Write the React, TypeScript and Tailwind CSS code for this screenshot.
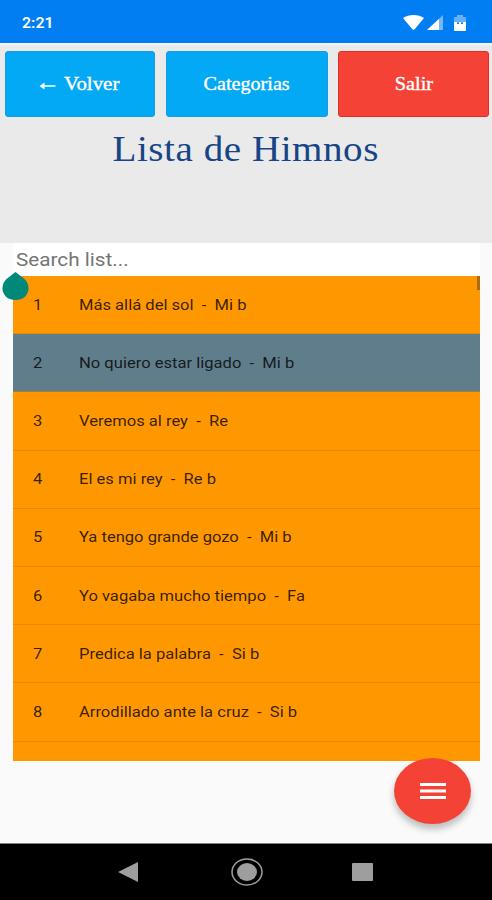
import React from 'react';

interface Hymn {
  id: number;
  title: string;
  tone: string;
}

const hymns: Hymn[] = [
  { id: 1, title: 'Más allá del sol', tone: 'Mi b' },
  { id: 2, title: 'No quiero estar ligado', tone: 'Mi b' },
  { id: 3, title: 'Veremos al rey', tone: 'Re' },
  { id: 4, title: 'El es mi rey', tone: 'Re b' },
  { id: 5, title: 'Ya tengo grande gozo', tone: 'Mi b' },
  { id: 6, title: 'Yo vagaba mucho tiempo', tone: 'Fa' },
  { id: 7, title: 'Predica la palabra', tone: 'Si b' },
  { id: 8, title: 'Arrodillado ante la cruz', tone: 'Si b' },
];

const StatusBar = () => (
  <header className="flex h-[45px] shrink-0 items-center justify-between border-b-2 border-[#f2f5fa] bg-[#007ef2] pl-[22px] pr-[26px] text-white">
    <span className="origin-left scale-x-[1.06] pt-[3px] text-[15px] font-semibold">2:21</span>
    <div className="flex items-center pt-0.5">
      <svg className="h-[15px] w-[21px]" viewBox="0 0 22 15" preserveAspectRatio="none" fill="currentColor">
        <path d="M0 3C6-1 16-1 22 3L12.2 14.3Q11 15.3 9.8 14.3Z" />
      </svg>
      <svg className="ml-[3px] h-[15px] w-4" viewBox="0 0 16 15" fill="currentColor">
        <path d="M0 15L16 0V15Z" opacity=".45" />
        <path d="M0 15L12 4V15Z" />
      </svg>
      <svg className="ml-[11px] h-4 w-3" viewBox="0 0 12 16" fill="currentColor">
        <path d="M3 2V0H9V2H11Q12 2 12 3V8H0V3Q0 2 1 2Z" opacity=".4" />
        <path d="M0 7H3V9H5V7H7V9H9V7H12V15Q12 16 11 16H1Q0 16 0 15Z" />
      </svg>
    </div>
  </header>
);

const HymnRow = ({ hymn, selected }: { hymn: Hymn; selected: boolean }) => (
  <li
    className={`flex h-[58.2px] shrink-0 items-center border-b pl-5 pt-[2px] text-[14.5px] text-black/80 ${
      selected ? 'border-[#a77d3b] bg-[#607d8b]' : 'border-[#e98b00]'
    }`}
  >
    <span className="w-[46px] origin-left scale-x-[1.14]">{hymn.id}</span>
    <span className="origin-left scale-x-[1.142] whitespace-pre">{`${hymn.title}  -  ${hymn.tone}`}</span>
  </li>
);

export default function App() {
  return (
    <div className="relative flex h-[900px] w-[492px] flex-col overflow-hidden bg-[#fafafa] font-['Roboto',sans-serif]">
      <StatusBar />

      <section className="h-[198px] shrink-0 bg-[#eaeaea] pt-1.5 font-['Liberation_Serif',serif]">
        <div className="flex h-[66px] justify-between pl-[5px] pr-[3px] text-[19px] text-white">
          <button className="flex w-[150px] items-center justify-center rounded-[3px] border border-[#129de0] bg-[#03a9f4] pr-1.5">
            <svg className="mr-2 mt-1 h-2 w-[17px]" viewBox="0 0 16 8" fill="currentColor">
              <path d="M0 4L5 0.5V3.2H16V4.8H5V7.5Z" />
            </svg>
            <span className="origin-left scale-x-[1.1] [-webkit-text-stroke:0.35px_white]">Volver</span>
          </button>
          <button className="w-[162px] rounded-[3px] border border-[#129de0] bg-[#03a9f4] [-webkit-text-stroke:0.35px_white]">
            <span className="inline-block scale-x-[1.06]">Categorias</span>
          </button>
          <button className="w-[151px] rounded-[3px] border border-[#e62b20] bg-[#f44336] [-webkit-text-stroke:0.35px_white]">
            <span className="inline-block scale-x-[1.07]">Salir</span>
          </button>
        </div>
        <h1 className="mt-[9px] text-center text-[36px] leading-[46px] tracking-[0.5px] text-[#164486]">
          <span className="inline-block scale-x-[1.085]">Lista de Himnos</span>
        </h1>
      </section>

      <main className="relative ml-[13px] w-[467px] shrink-0">
        <div className="flex h-[33px] items-center bg-white pl-[3px] text-[18px] text-[#757575]">
          <span className="origin-left scale-x-[1.15]">Search list...</span>
        </div>
        <ul className="flex h-[485px] flex-col overflow-hidden bg-[#ff9800]">
          {hymns.map((hymn) => (
            <HymnRow key={hymn.id} hymn={hymn} selected={hymn.id === 2} />
          ))}
        </ul>
        {/* scroll thumb */}
        <div className="absolute right-0 top-[33px] h-3.5 w-[3px] bg-[#ac6c0e]" />
        {/* text cursor handle */}
        <svg className="absolute -left-[11px] top-[29px] h-7 w-[27px]" viewBox="0 0 27 28">
          <path d="M13.5 0L22.5 7C30 14 27 28 13.5 28S-3 14 4.5 7Z" fill="#00897b" />
        </svg>
      </main>

      <button className="absolute left-[394px] top-[758px] flex h-[66px] w-[77px] items-center justify-center rounded-[50%] bg-[#f44336] shadow-[0_5px_7px_rgba(0,0,0,0.25)]">
        <svg className="h-4 w-[26px]" viewBox="0 0 26 16" fill="#fff">
          <path d="M0 0H26V3H0ZM0 6.5H26V9.5H0ZM0 13H26V16H0Z" />
        </svg>
      </button>

      <nav className="mt-auto flex h-[57px] shrink-0 items-center border-t border-[#808080] bg-black">
        <svg className="ml-[118px] h-5 w-5" viewBox="0 0 20 20" fill="#9e9e9e">
          <path d="M0 10L20 0V20Z" />
        </svg>
        <svg className="ml-[93px] h-7 w-8" viewBox="0 0 32 28">
          <ellipse cx="16" cy="14" rx="15" ry="13" fill="none" stroke="#9e9e9e" strokeWidth="1.5" />
          <ellipse cx="16" cy="14" rx="10" ry="9" fill="#9e9e9e" />
        </svg>
        <div className="ml-[89px] h-[18px] w-[21px] rounded-[1px] bg-[#9e9e9e]" />
      </nav>
    </div>
  );
}
